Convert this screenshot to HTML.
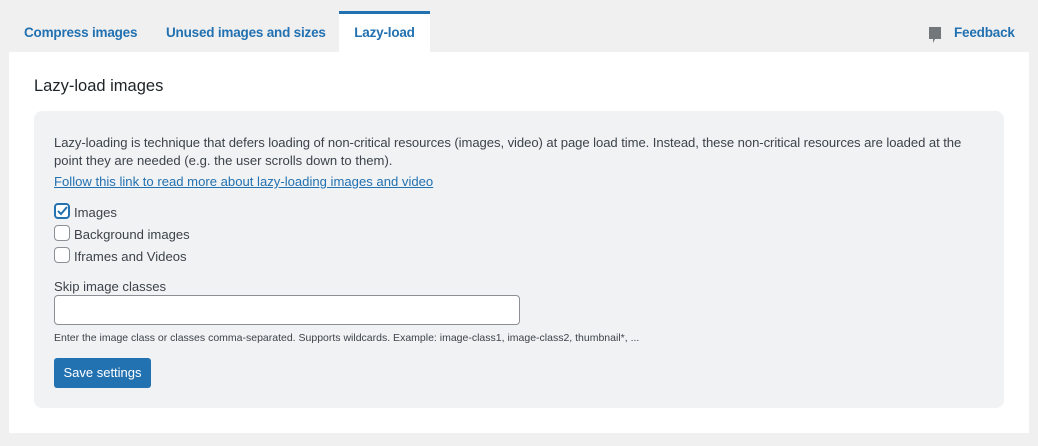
<!DOCTYPE html>
<html><head><meta charset="utf-8"><style>
*{box-sizing:border-box;margin:0;padding:0}
body{width:1038px;height:446px;background:#f0f0f1;font-family:"Liberation Sans",sans-serif;color:#3c434a;font-size:13.1px;position:relative;overflow:hidden}
.tab{position:absolute;top:11px;height:41px;line-height:44px;font-size:13.5px;font-weight:bold;color:#2271b1;letter-spacing:-0.2px}
.act{background:#fff;border-top:3px solid #2271b1;line-height:38px;text-align:center;color:#2271b1}
.panel{position:absolute;left:9px;top:52px;width:1020px;height:381px;background:#fff}
h2{position:absolute;left:34px;top:77px;font-size:16.5px;font-weight:normal;color:#1d2327}
.box{position:absolute;left:34px;top:111px;width:970px;height:297px;background:#f1f2f4;border-radius:8px}
.t{position:absolute;left:54px;white-space:nowrap}
a{color:#2271b1}
.cb{position:absolute;left:54px;width:16px;height:16px;border:1px solid #8c8f94;border-radius:4px;background:#fff}
.inp{position:absolute;left:54px;top:295px;width:466px;height:30px;border:1px solid #8c8f94;border-radius:4px;background:#fff}
.btn{position:absolute;left:54px;top:358px;width:97px;height:30px;background:#2271b1;border-radius:3px;color:#fff;font-size:13px;line-height:30px;text-align:center}
</style></head><body>
<div class="tab" style="left:24px">Compress images</div>
<div class="tab" style="left:166px">Unused images and sizes</div>
<div class="tab act" style="left:339px;width:91px">Lazy-load</div>
<svg style="position:absolute;left:928px;top:26px" width="14" height="18" viewBox="0 0 14 18"><path d="M1 1h12v12H7l-2 4v-4H1z" fill="#72777c"/></svg>
<div class="tab" style="left:954px">Feedback</div>
<div class="panel"></div>
<h2>Lazy-load images</h2>
<div class="box"></div>
<div class="t" style="top:135px;letter-spacing:-0.07px">Lazy-loading is technique that defers loading of non-critical resources (images, video) at page load time. Instead, these non-critical resources are loaded at the</div>
<div class="t" style="top:153px">point they are needed (e.g. the user scrolls down to them).</div>
<div class="t" style="top:174px"><a href="#">Follow this link to read more about lazy-loading images and video</a></div>
<div class="cb" style="top:203px;border-color:#2271b1;border-width:2px"><svg width="14" height="14" viewBox="0 0 14 14" style="position:absolute;left:-1px;top:-1px"><path d="M3 7l3 3 6-7" stroke="#2271b1" stroke-width="2" fill="none"/></svg></div>
<div class="t" style="top:205px;left:74px">Images</div>
<div class="cb" style="top:225px"></div>
<div class="t" style="top:227px;left:74px">Background images</div>
<div class="cb" style="top:247px"></div>
<div class="t" style="top:249px;left:74px">Iframes and Videos</div>
<div class="t" style="top:279px">Skip image classes</div>
<div class="inp"></div>
<div class="t" style="top:332px;font-size:10.5px">Enter the image class or classes comma-separated. Supports wildcards. Example: image-class1, image-class2, thumbnail*, ...</div>
<div class="btn">Save settings</div>
</body></html>
